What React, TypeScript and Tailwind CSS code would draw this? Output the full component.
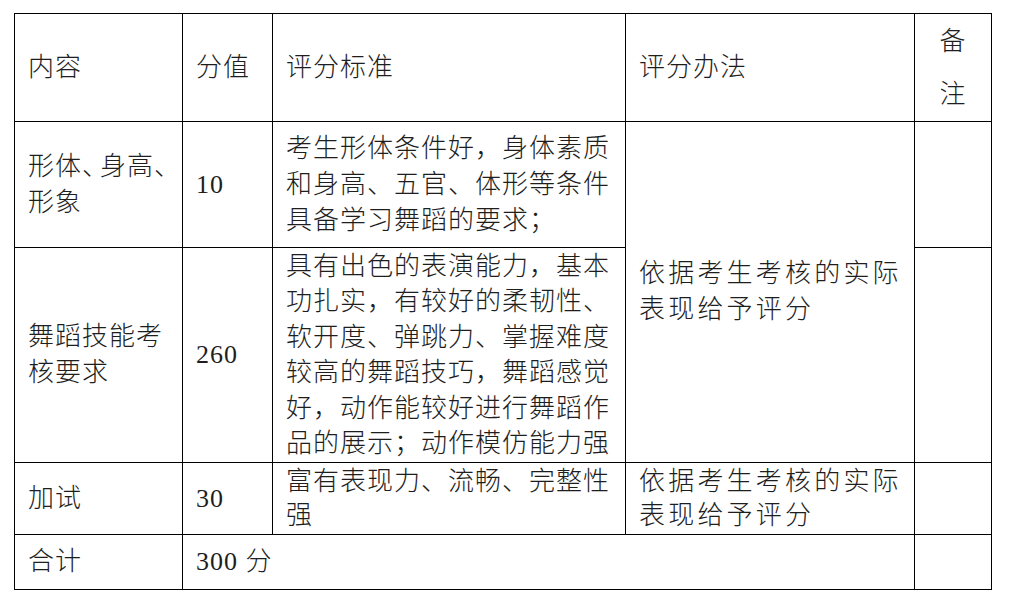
import React from "react";

const cell = "border border-black px-[13px] align-middle";

export default function App() {
  return (
    <div className="min-h-screen bg-white pl-[14px] pt-[13px] text-[#1e1e1e] [font-family:'Liberation_Serif','Noto_Sans_CJK_SC',serif] text-[26px] leading-[36px] tracking-[1px] font-light">
      <table className="table-fixed border-collapse w-[977px]">
        <colgroup>
          <col className="w-[168px]" />
          <col className="w-[90px]" />
          <col className="w-[353px]" />
          <col className="w-[289px]" />
          <col className="w-[77px]" />
        </colgroup>
        <tbody>
          <tr>
            <td className={`${cell} h-[108px]`}>内容</td>
            <td className={cell}>分值</td>
            <td className={cell}>评分标准</td>
            <td className={cell}>评分办法</td>
            <td className={`${cell} text-center leading-[53px]`}>
              备<br />注
            </td>
          </tr>
          <tr>
            <td className={`${cell} h-[126px] whitespace-nowrap`}>
              形体<span className="tracking-[-8px]">、</span>身高、<br />形象
            </td>
            <td className={cell}>10</td>
            <td className={`${cell} whitespace-nowrap`}>
              考生形体条件好，身体素质
              <br />
              和身高、五官、体形等条件
              <br />
              具备学习舞蹈的要求；
            </td>
            <td rowSpan={2} className={`${cell} whitespace-nowrap tracking-[3.2px]`}>
              依据考生考核的实际
              <br />
              表现给予评分
            </td>
            <td className={cell}></td>
          </tr>
          <tr>
            <td className={`${cell} h-[215px] whitespace-nowrap`}>
              舞蹈技能考
              <br />
              核要求
            </td>
            <td className={cell}>260</td>
            <td className={`${cell} whitespace-nowrap leading-[35.5px]`}>
              具有出色的表演能力，基本
              <br />
              功扎实，有较好的柔韧性、
              <br />
              软开度、弹跳力、掌握难度
              <br />
              较高的舞蹈技巧，舞蹈感觉
              <br />
              好，动作能较好进行舞蹈作
              <br />
              品的展示；动作模仿能力强
            </td>
            <td className={cell}></td>
          </tr>
          <tr>
            <td className={`${cell} h-[72px]`}>加试</td>
            <td className={cell}>30</td>
            <td className={`${cell} whitespace-nowrap leading-[34px]`}>
              富有表现力、流畅、完整性
              <br />
              强
            </td>
            <td className={`${cell} whitespace-nowrap tracking-[3.2px] leading-[34px]`}>
              依据考生考核的实际
              <br />
              表现给予评分
            </td>
            <td className={cell}></td>
          </tr>
          <tr>
            <td className={`${cell} h-[55px]`}>合计</td>
            <td colSpan={3} className={cell}>
              300 分
            </td>
            <td className={cell}></td>
          </tr>
        </tbody>
      </table>
    </div>
  );
}
